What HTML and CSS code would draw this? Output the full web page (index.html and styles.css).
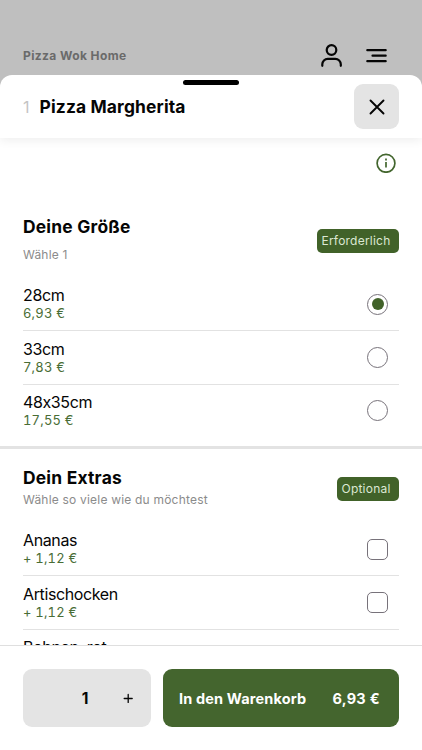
FILE: index.html
```html
<!DOCTYPE html>
<html lang="de">
<head>
<meta charset="utf-8">
<meta name="viewport" content="width=device-width, initial-scale=1">
<title>Pizza Margherita</title>
<link rel="stylesheet" href="styles.css">
</head>
<body>
<div class="app">
  <header class="topbar">
    <span class="brand">Pizza Wok Home</span>
    <svg class="icon-user" width="24" height="26" viewBox="0 0 24 26"><circle cx="12.500" cy="7" r="4.800"/><path d="M3.300 22.800v-1.500a5.500 5.500 0 0 1 5.500-5.500h7.500a5.500 5.500 0 0 1 5.500 5.500v1.500"/></svg>
    <svg class="icon-menu" width="22" height="16" viewBox="0 0 22 16"><path d="M2.300 2.200h18.400M7.500 7.700h13.200M2.300 13.200h18.400"/></svg>
  </header>
  <main class="sheet">
    <div class="sheet-head">
      <span class="handle"></span>
      <span class="number">1</span>
      <h1>Pizza Margherita</h1>
      <button class="close" aria-label="Schließen"><svg width="17" height="17" viewBox="0 0 17 17"><path d="M2.500 2.500l13 13M15.500 2.500l-13 13"/></svg></button>
    </div>
    <div class="content">
      <div class="info"><svg width="20" height="20" viewBox="0 0 20 20"><circle cx="10" cy="10.300" r="8.900"/><path d="M10 9v5.500M10 5.500v1.900"/></svg></div>
      <section class="group sizes">
        <div class="group-head">
          <div><h2>Deine Größe</h2><p class="hint">Wähle 1</p></div>
          <span class="badge required">Erforderlich</span>
        </div>
        <div class="option"><div><div class="name">28cm</div><div class="price">6,93 €</div></div><span class="radio checked"></span></div>
        <div class="option"><div><div class="name">33cm</div><div class="price">7,83 €</div></div><span class="radio"></span></div>
        <div class="option"><div><div class="name">48x35cm</div><div class="price">17,55 €</div></div><span class="radio"></span></div>
      </section>
      <section class="group extras">
        <div class="group-head">
          <div><h2>Dein Extras</h2><p class="hint">Wähle so viele wie du möchtest</p></div>
          <span class="badge optional">Optional</span>
        </div>
        <div class="option"><div><div class="name">Ananas</div><div class="price plus">+ 1,12 €</div></div><span class="check"></span></div>
        <div class="option"><div><div class="name">Artischocken</div><div class="price plus">+ 1,12 €</div></div><span class="check"></span></div>
        <div class="option"><div><div class="name">Bohnen, rot</div><div class="price plus">+ 1,12 €</div></div><span class="check"></span></div>
      </section>
    </div>
    <footer class="footer">
      <div class="stepper"><span></span><b>1</b><svg width="10" height="10" viewBox="0 0 10 10"><path d="M1.200 5.500h8M5.200 1.500v8"/></svg></div>
      <button class="cart"><span>In den Warenkorb</span><span class="cart-price">6,93 €</span></button>
    </footer>
  </main>
</div>
</body>
</html>
```
FILE: styles.css
```css
* { box-sizing: border-box; }
body { margin: 0; font-family: Inter, "Liberation Sans", sans-serif; color: #050505; font-feature-settings: "calt" 0; }
h1, h2, p { margin: 0; }
button { border: 0; padding: 0; font: inherit; }
svg { display: block; fill: none; stroke: #050505; stroke-linecap: round; stroke-linejoin: round; }
.app { height: 750px; display: flex; flex-direction: column; background: #bfbfbf; overflow: hidden; }
.topbar { height: 75px; flex: none; display: flex; align-items: center; padding: 37px 35px 0 23px; }
.brand { flex: 1; padding-bottom: 2px; color: #6a6a6a; font-size: 12px; font-weight: 700; letter-spacing: .4px; }
.icon-user { margin-right: 22px; stroke-width: 2.200; }
.icon-menu { stroke-width: 2.200; }
.sheet { flex: 1; min-height: 0; display: flex; flex-direction: column; background: #fff; border-radius: 12px 12px 0 0; overflow: hidden; }
.sheet-head { position: relative; flex: none; height: 63px; display: flex; align-items: center; padding: 0 23px; box-shadow: 0 2px 10px rgba(0,0,0,.075); }
.handle { position: absolute; top: 5px; left: 183px; width: 56px; height: 5px; border-radius: 3px; background: #000; }
.number { width: 16.500px; color: #c4c4c4; font-size: 16px; }
h1 { flex: 1; font-size: 17.400px; line-height: 22px; font-weight: 700; letter-spacing: .15px; }
.close { width: 45px; height: 45px; border-radius: 9px; background: #e4e4e4; display: grid; place-items: center; }
.close svg { stroke-width: 1.900; }
.content { flex: 1; min-height: 0; overflow: hidden; }
.info { height: 77px; padding: 15px 26px 0; display: flex; justify-content: flex-end; }
.info svg { stroke: #43662e; stroke-width: 1.700; stroke-linecap: butt; }
.group { padding: 0 23px; }
.sizes { height: 234px; border-bottom: 3px solid #e3e3e3; }
.group-head { display: flex; justify-content: space-between; }
.sizes .group-head { height: 63px; }
.extras .group-head { height: 74px; padding-top: 17px; }
h2 { font-size: 17.400px; line-height: 24px; font-weight: 700; letter-spacing: .22px; }
.hint { font-size: 12px; line-height: 16px; color: #8b8b8b; letter-spacing: .2px; }
.sizes .hint { margin-top: 8px; }
.extras .hint { margin-top: 2px; }
.badge { height: 24px; padding: 0 8px 0 4.500px; border-radius: 5px; background: #416229; color: #dce8d3; font-size: 12px; line-height: 24px; letter-spacing: .22px; }
.required { width: 82px; margin-top: 14px; }
.optional { width: 62px; margin-top: 11px; }
.option { height: 53.400px; display: flex; align-items: center; justify-content: space-between; padding-right: 11px; border-bottom: 1px solid #e2e2e2; }
.sizes .option:last-child { border-bottom-color: transparent; }
.option > div { padding-bottom: 1px; }
.name { font-size: 16px; line-height: 19px; letter-spacing: -.38px; }
.price { font-size: 13px; line-height: 16px; color: #496d35; letter-spacing: .18px; font-variant-numeric: tabular-nums; }
.plus { letter-spacing: .18px; }
.radio, .check { width: 21px; height: 21px; border: 1px solid #77727a; border-radius: 50%; flex: none; }
.checked { display: grid; place-items: center; }
.checked::after { content: ""; width: 12px; height: 12px; border-radius: 50%; background: #416229; }
.check { border-radius: 5px; }
.footer { flex: none; height: 105px; border-top: 1px solid #dfdfdf; padding: 23px 23px 0; display: flex; gap: 12px; background: #fff; }
.stepper { width: 128px; height: 58px; border-radius: 9px; background: #e4e4e4; display: grid; grid-template-columns: 43px 38px 47px; place-items: center; font-size: 15.500px; }
.stepper svg { stroke-width: 1.300; }
.cart { flex: 1; height: 58px; border-radius: 9px; background: #44652e; color: #fff; display: flex; align-items: center; justify-content: space-between; padding: 0 19px 0 16px; font-size: 14.500px; font-weight: 700; letter-spacing: .15px; }
.cart-price { letter-spacing: .3px; }
```
